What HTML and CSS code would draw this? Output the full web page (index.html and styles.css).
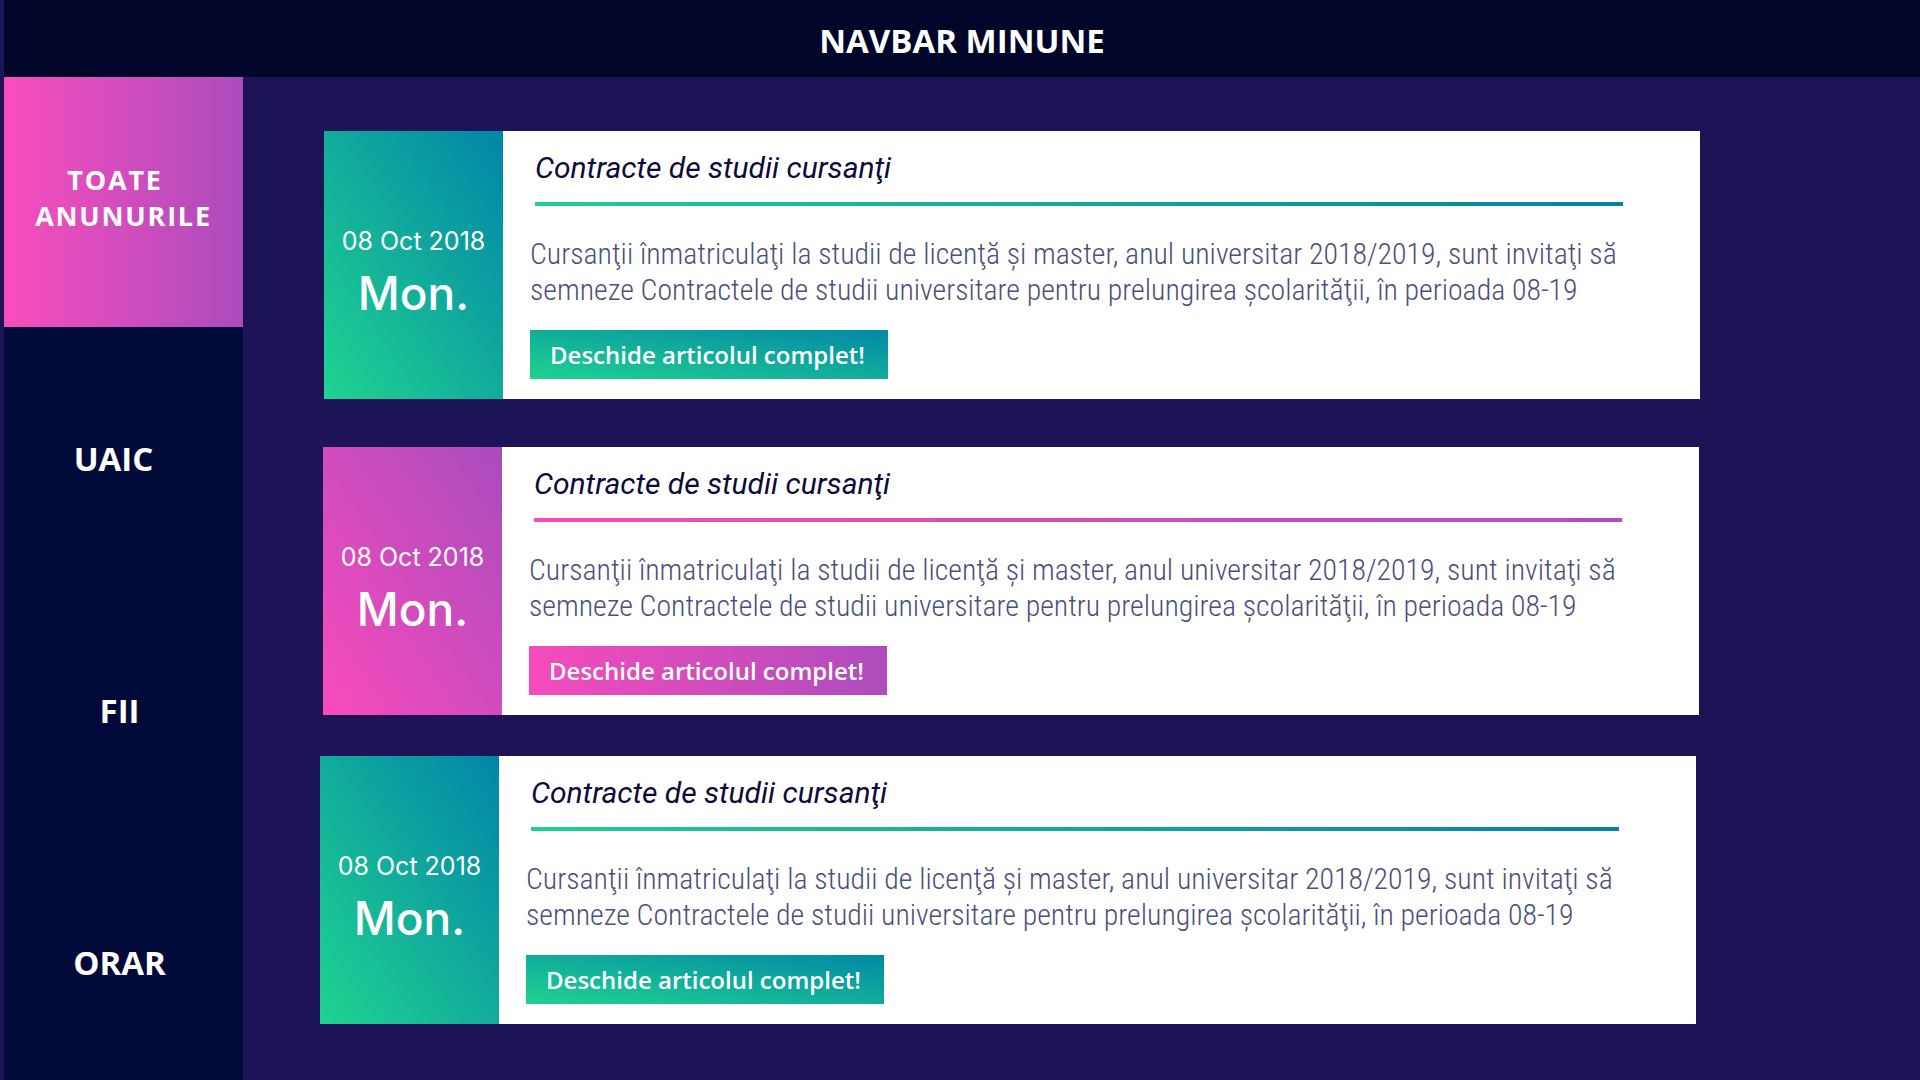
FILE: index.html
```html
<!DOCTYPE html>
<html lang="ro">
<head>
<meta charset="utf-8">
<title>Anunturi</title>
<link rel="stylesheet" href="styles.css">
</head>
<body>
<div class="page">
  <header class="navbar">
    <h1 class="navbar-title">NAVBAR MINUNE</h1>
  </header>
  <div class="layout">
    <nav class="sidebar">
      <a class="side-item side-item--active" href="#"><span><span class="side-word">TOATE</span> ANUNURILE</span></a>
      <a class="side-item side-item--uaic" href="#">UAIC</a>
      <a class="side-item" href="#">FII</a>
      <a class="side-item" href="#">ORAR</a>
    </nav>
    <main class="feed">
      <article class="card card--teal card--one">
        <div class="card-date">
          <span class="date-full">08 Oct 2018</span>
          <span class="date-day">Mon.</span>
        </div>
        <div class="card-body">
          <h2 class="card-title">Contracte de studii cursanţi</h2>
          <div class="card-rule"></div>
          <p class="card-text">Cursanţii înmatriculaţi la studii de licenţă și master, anul universitar 2018/2019, sunt invitaţi să semneze Contractele de studii universitare pentru prelungirea școlarităţii, în perioada 08-19</p>
          <a class="card-btn" href="#">Deschide articolul complet!</a>
        </div>
      </article>
      <article class="card card--pink card--two">
        <div class="card-date">
          <span class="date-full">08 Oct 2018</span>
          <span class="date-day">Mon.</span>
        </div>
        <div class="card-body">
          <h2 class="card-title">Contracte de studii cursanţi</h2>
          <div class="card-rule"></div>
          <p class="card-text">Cursanţii înmatriculaţi la studii de licenţă și master, anul universitar 2018/2019, sunt invitaţi să semneze Contractele de studii universitare pentru prelungirea școlarităţii, în perioada 08-19</p>
          <a class="card-btn" href="#">Deschide articolul complet!</a>
        </div>
      </article>
      <article class="card card--teal card--three">
        <div class="card-date">
          <span class="date-full">08 Oct 2018</span>
          <span class="date-day">Mon.</span>
        </div>
        <div class="card-body">
          <h2 class="card-title">Contracte de studii cursanţi</h2>
          <div class="card-rule"></div>
          <p class="card-text">Cursanţii înmatriculaţi la studii de licenţă și master, anul universitar 2018/2019, sunt invitaţi să semneze Contractele de studii universitare pentru prelungirea școlarităţii, în perioada 08-19</p>
          <a class="card-btn" href="#">Deschide articolul complet!</a>
        </div>
      </article>
    </main>
  </div>
</div>
</body>
</html>
```
FILE: styles.css
```css
* { box-sizing: border-box; }
html, body { margin: 0; padding: 0; }
body {
  background: #1c1456;
  font-family: "Open Sans", "Liberation Sans", sans-serif;
  overflow: hidden;
}
.page {
  height: 1080px;
  padding-left: 4px;
  display: flex;
  flex-direction: column;
}
.navbar {
  height: 77px;
  flex: none;
  padding-top: 3px;
  background: #000529;
  display: flex;
  align-items: center;
  justify-content: center;
}
.navbar-title {
  margin: 0;
  color: #fff;
  font-size: 33px;
  font-weight: 700;
  line-height: 1;
}
.layout {
  flex: 1;
  display: flex;
  min-height: 0;
}
.sidebar {
  width: 239px;
  flex: none;
  background: #020a3a;
  display: flex;
  flex-direction: column;
}
.side-item {
  height: 252px;
  flex: none;
  display: flex;
  align-items: center;
  justify-content: center;
  padding: 10px 8px 0 0;
  color: #fff;
  text-decoration: none;
  font-weight: 700;
  font-size: 33px;
  text-align: center;
}
.side-item--uaic { padding-right: 20px; }
.side-item--active {
  height: 250px;
  padding: 0 0 8px 0;
  font-size: 27px;
  line-height: 36px;
  letter-spacing: 1.8px;
  background: linear-gradient(to right, #f94dbd, #ab4cbd);
}
.side-word { margin-right: 17px; }
.feed {
  flex: 1;
  padding-top: 54px;
  display: flex;
  flex-direction: column;
}
.card {
  width: 1376px;
  display: flex;
  background: #fff;
}
.card--one { margin-left: 81px; }
.card--two { margin-left: 80px; margin-top: 48px; }
.card--three { margin-left: 77px; margin-top: 41px; }
.card-date {
  width: 179px;
  flex: none;
  padding-top: 17px;
  display: flex;
  flex-direction: column;
  align-items: center;
  justify-content: center;
  color: #fff;
  font-family: Inter, "Liberation Sans", sans-serif;
}
.card--teal .card-date { background: linear-gradient(to top right, #21d38f, #0285a8); }
.card--pink .card-date { background: linear-gradient(to top right, #f94bbc, #a94cbe); }
.date-full {
  font-size: 25px;
  font-weight: 400;
  line-height: 30px;
}
.date-day {
  margin-top: 9px;
  font-size: 46px;
  font-weight: 500;
  line-height: 56px;
}
.card-body {
  flex: 1;
  padding: 20px 0 20px 27px;
}
.card-title {
  margin: 0 0 17px 5px;
  font-family: Roboto, "Liberation Sans", sans-serif;
  font-style: italic;
  font-weight: 400;
  font-size: 30px;
  line-height: 34px;
  color: #0c0b3b;
}
.card-rule {
  width: 1088px;
  height: 4px;
  margin-left: 5px;
}
.card--teal .card-rule { background: linear-gradient(to right, #20cf91, #0283a8); }
.card--pink .card-rule { background: linear-gradient(to right, #f84bbd, #b04dbf); }
.card-text {
  width: 1100px;
  margin: 30px 0 22px;
  font-family: "Roboto Condensed", Roboto, "Liberation Sans", sans-serif;
  font-weight: 300;
  font-size: 29.8px;
  line-height: 36px;
  color: #4b4f7b;
}
.card-btn {
  display: inline-flex;
  align-items: center;
  height: 49px;
  width: 358px;
  padding: 0 20px;
  color: #fff;
  text-decoration: none;
  font-weight: 600;
  font-size: 24px;
  white-space: nowrap;
}
.card--teal .card-btn { background: linear-gradient(to top right, #20d291, #0288a6); }
.card--pink .card-btn { background: linear-gradient(to right, #f64bbc, #ae4cbd); }
```
